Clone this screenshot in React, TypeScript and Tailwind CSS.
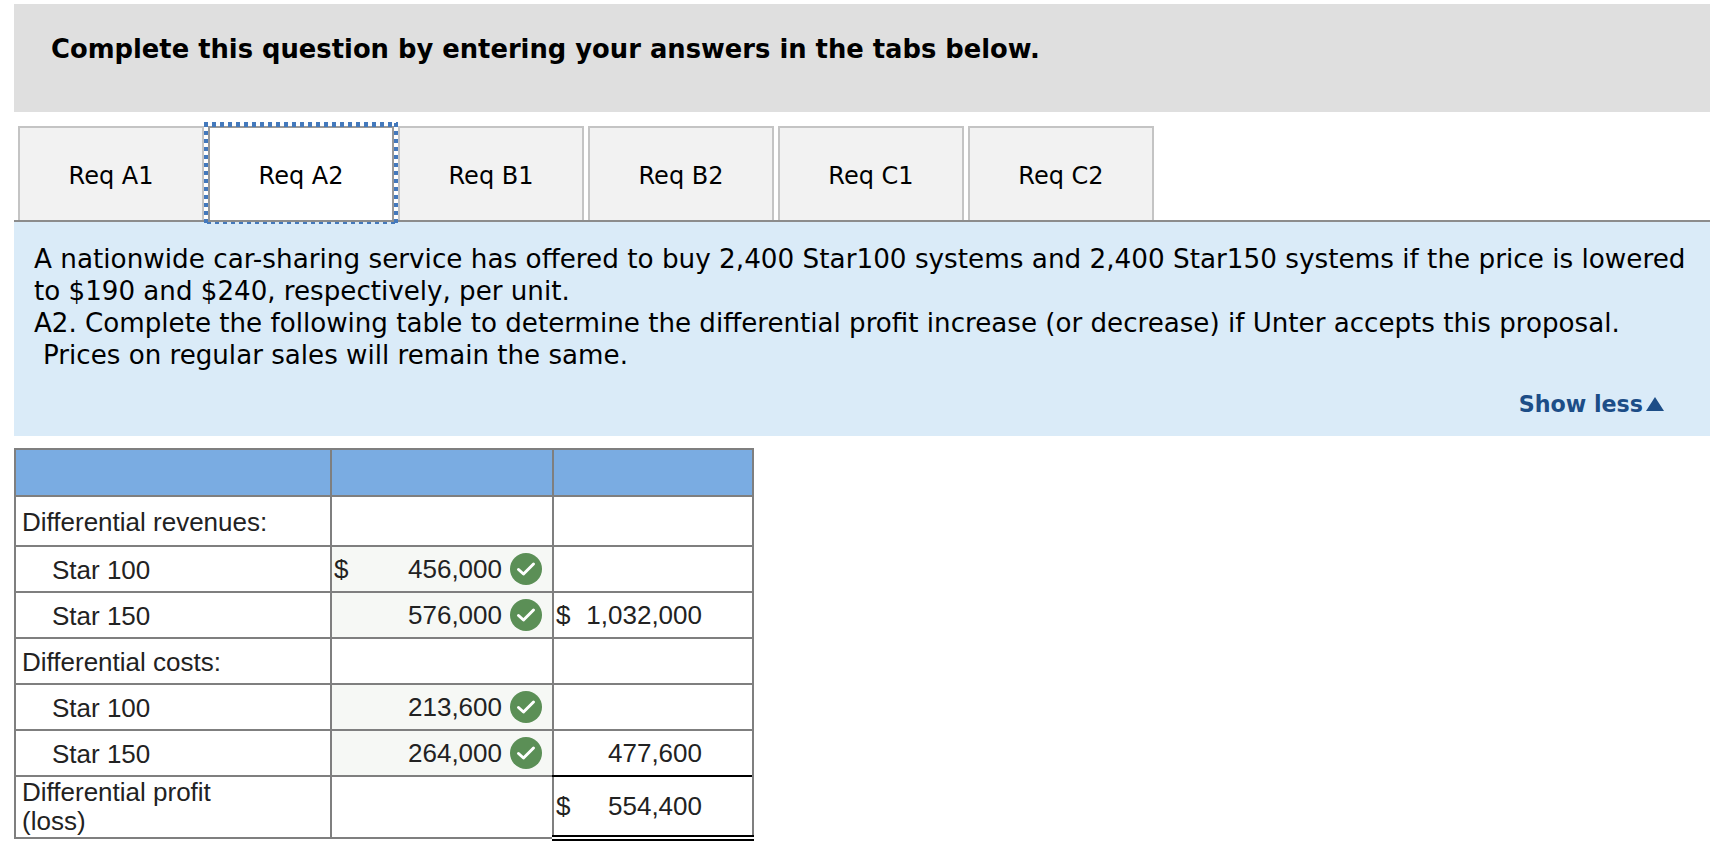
// App.tsx
// Homework question view: tabs, prompt panel and the answer table.

const tabs = ["Req A1", "Req A2", "Req B1", "Req B2", "Req C1", "Req C2"];

function Check() {
  return (
    <svg viewBox="0 0 32 32" className="w-8 h-8 shrink-0">
      <circle cx="16" cy="16" r="16" fill="#5b8f56" />
      <path d="M8.5 16.5l5 4.5 10-10" fill="none" stroke="#fff" strokeWidth="3" strokeLinecap="round" strokeLinejoin="round" />
    </svg>
  );
}

function InputCell({ dollar, value }: { dollar?: boolean; value: string }) {
  return (
    <td className="border-2 border-[#7f7f7f] bg-[#f6f8f5] p-0 h-[46px]">
      <div className="flex items-center pl-[2px] pr-[10px] -mt-px">
        <span className="w-[20px] pt-[2px]">{dollar ? "$" : ""}</span>
        <span className="flex-1 text-right pt-[2px]">{value}</span>
        <span className="ml-[8px]"><Check /></span>
      </div>
    </td>
  );
}

function LabelCell({ text, indent }: { text: string; indent?: boolean }) {
  return (
    <td className={`border-2 border-[#7f7f7f] p-0 pt-[2px] ${indent ? "pl-[36px]" : "pl-[6px]"}`}>{text}</td>
  );
}

function TotalCell({ dollar, value }: { dollar?: boolean; value: string }) {
  return (
    <td className="border-2 border-[#7f7f7f] p-0 pt-[1px]">
      <div className="flex items-center pl-[2px] pr-[50px]">
        <span className="w-[20px]">{dollar ? "$" : ""}</span>
        <span className="flex-1 text-right">{value}</span>
      </div>
    </td>
  );
}

// focus ring of the active tab: square dots on three sides, thin dashes below
function FocusRing() {
  return (
    <>
      <span className="absolute -left-[6px] -right-[6px] -top-[6px] h-[5px] bg-[repeating-linear-gradient(90deg,#4479bc_0_4px,transparent_4px_8px)]" />
      <span className="absolute -left-[6px] w-[4px] -top-[5px] -bottom-[4px] bg-[repeating-linear-gradient(180deg,#4479bc_0_4px,transparent_4px_8px)]" />
      <span className="absolute -right-[6px] w-[4px] -top-[5px] -bottom-[4px] bg-[repeating-linear-gradient(180deg,#4479bc_0_4px,transparent_4px_8px)]" />
      <span className="absolute -left-[6px] -right-[6px] -bottom-[4px] h-[2px] bg-[repeating-linear-gradient(90deg,transparent_0_3px,#4479bc_3px_7px,transparent_7px_8px)]" />
    </>
  );
}

export default function App() {
  return (
    <div className="bg-white min-h-screen pt-1 pl-[14px] font-['DejaVu_Sans',sans-serif] text-black overflow-hidden">
      <div className="bg-[#dfdfdf] h-[108px] pt-[27px] pl-[37px] text-[25.8px] leading-[36px] font-bold">
        Complete this question by entering your answers in the tabs below.
      </div>

      <div className="relative z-10 flex mt-[14px] pl-[4px] gap-[4px] h-[94px] items-stretch">
        {tabs.map((t, i) =>
          i === 1 ? (
            <div key={t} className="relative w-[186px] bg-white border-2 border-[#999] border-b-0 flex items-center justify-center text-[24px] pt-[3px]">
              {t}
              <FocusRing />
            </div>
          ) : (
            <div key={t} className="w-[186px] bg-[#f2f2f2] border-2 border-[#c4c4c4] border-b-0 flex items-center justify-center text-[24px] pt-[3px]">
              {t}
            </div>
          ),
        )}
      </div>

      <div className="bg-[#daebf8] border-t-2 border-[#8c8c8c] h-[216px] relative px-[20px] pt-[21px] text-[26.14px] leading-[32px]">
        <p className="text-[26.25px]">
          A nationwide car-sharing service has offered to buy 2,400 Star100 systems and 2,400 Star150 systems if the price is lowered
        </p>
        <p>to $190 and $240, respectively, per unit.</p>
        <p>A2. Complete the following table to determine the differential profit increase (or decrease) if Unter accepts this proposal.</p>
        <p className="pl-[9px]">Prices on regular sales will remain the same.</p>
        <div className="absolute right-[46px] bottom-[16px] flex items-center text-[#1c4d87] font-bold text-[22.2px]">
          Show less
          <span className="ml-[3px] w-0 h-0 border-x-[9.5px] border-x-transparent border-b-[14px] border-b-[#1c4d87]" />
        </div>
      </div>

      <table className="mt-[12px] w-[738px] table-fixed border-collapse font-['Liberation_Sans',sans-serif] text-[26px] leading-[29px] text-[#222]">
        <colgroup>
          <col className="w-[316px]" />
          <col className="w-[222px]" />
          <col className="w-[200px]" />
        </colgroup>
        <tbody>
          <tr className="h-[47px]">
            <td className="border-2 border-[#7f7f7f] bg-[#7aace2]" />
            <td className="border-2 border-[#7f7f7f] bg-[#7aace2]" />
            <td className="border-2 border-[#7f7f7f] bg-[#7aace2]" />
          </tr>
          <tr className="h-[50px]">
            <LabelCell text="Differential revenues:" />
            <td className="border-2 border-[#7f7f7f]" />
            <td className="border-2 border-[#7f7f7f]" />
          </tr>
          <tr className="h-[46px]">
            <LabelCell text="Star 100" indent />
            <InputCell dollar value="456,000" />
            <td className="border-2 border-[#7f7f7f]" />
          </tr>
          <tr className="h-[46px]">
            <LabelCell text="Star 150" indent />
            <InputCell value="576,000" />
            <TotalCell dollar value="1,032,000" />
          </tr>
          <tr className="h-[46px]">
            <LabelCell text="Differential costs:" />
            <td className="border-2 border-[#7f7f7f]" />
            <td className="border-2 border-[#7f7f7f]" />
          </tr>
          <tr className="h-[46px]">
            <LabelCell text="Star 100" indent />
            <InputCell value="213,600" />
            <td className="border-2 border-[#7f7f7f]" />
          </tr>
          <tr className="h-[46px]">
            <LabelCell text="Star 150" indent />
            <InputCell value="264,000" />
            <TotalCell value="477,600" />
          </tr>
          <tr className="h-[62px]">
            <td className="border-2 border-[#7f7f7f] p-0 pl-[6px]">Differential profit<br />(loss)</td>
            <td className="border-2 border-[#7f7f7f]" />
            <td className="border-2 border-[#7f7f7f] border-t-black border-b-[6px] border-b-black border-double p-0">
              <div className="flex items-center pl-[2px] pr-[50px]">
                <span className="w-[20px]">$</span>
                <span className="flex-1 text-right">554,400</span>
              </div>
            </td>
          </tr>
        </tbody>
      </table>
    </div>
  );
}
